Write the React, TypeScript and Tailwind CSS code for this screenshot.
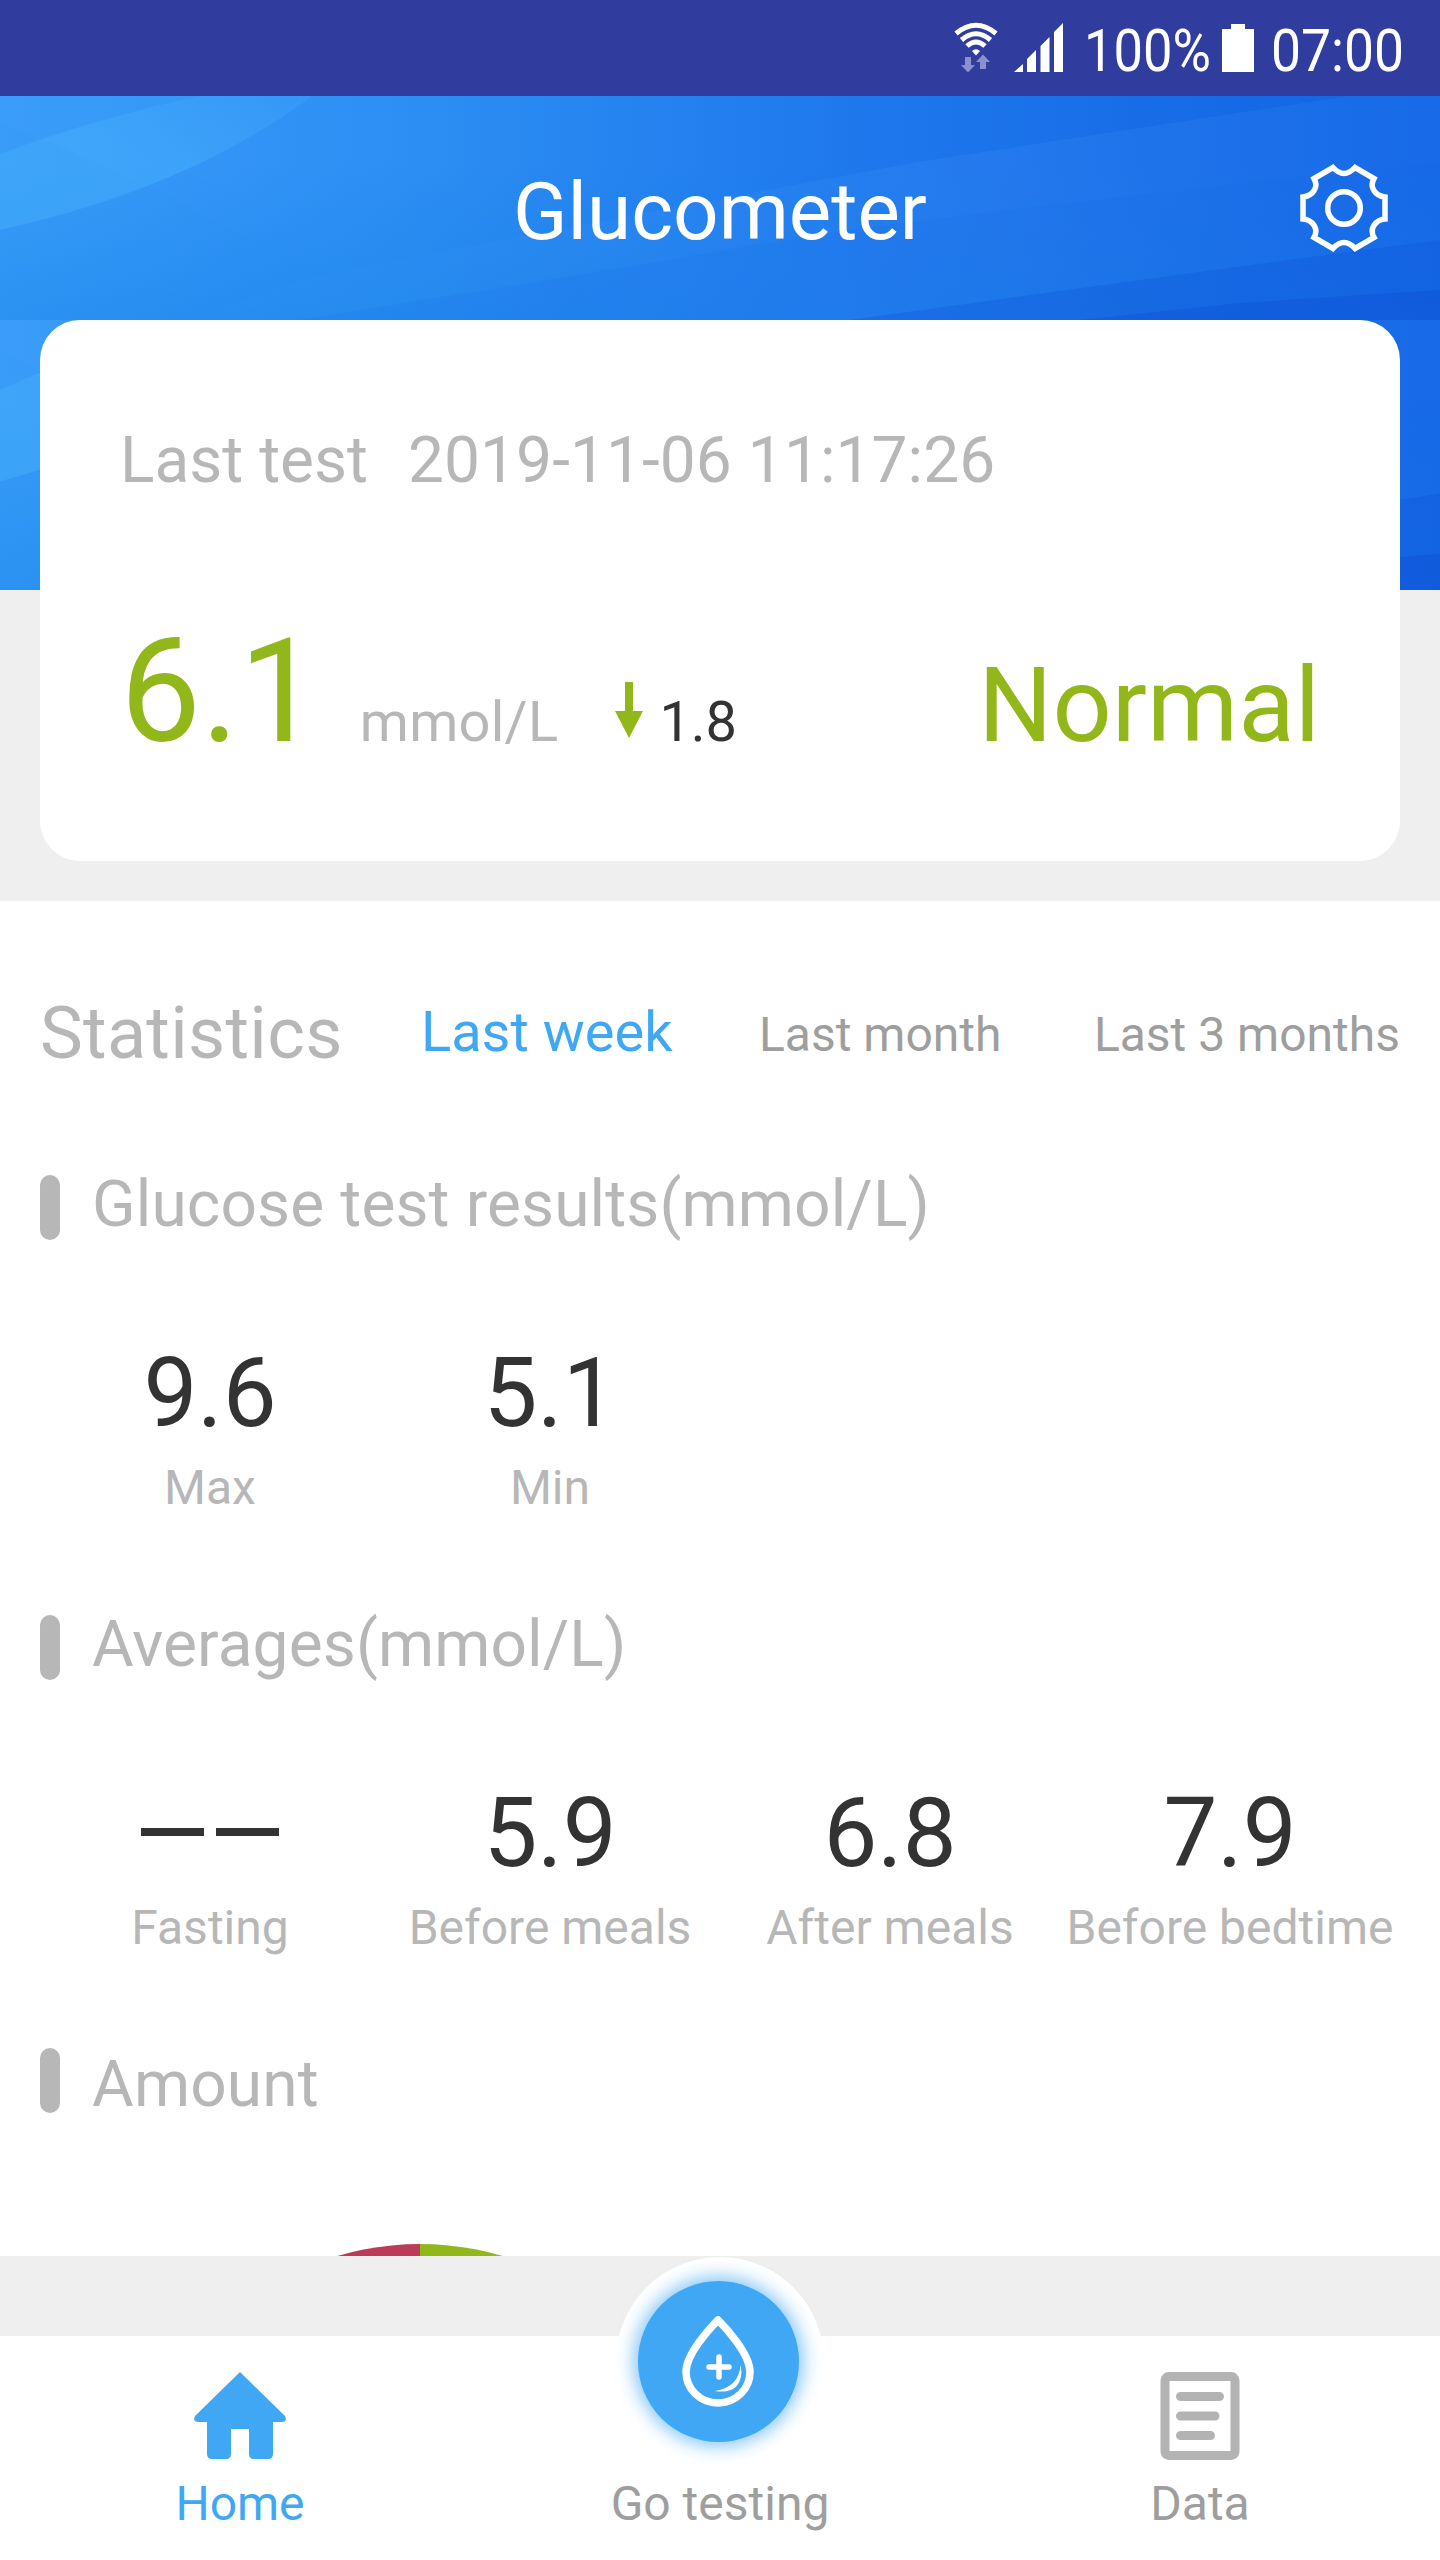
import type { ReactNode } from "react";

const results = [
  { label: "Max", value: "9.6" },
  { label: "Min", value: "5.1" },
];

const averages = [
  { label: "Fasting", value: null },
  { label: "Before meals", value: "5.9" },
  { label: "After meals", value: "6.8" },
  { label: "Before bedtime", value: "7.9" },
];

function StatusBar() {
  return (
    <div className="flex h-24 items-center justify-end bg-[#303d9f] pr-[37px] text-white">
      <svg width="44" height="52" viewBox="0 0 44 52" className="mr-4">
        <g fill="none" stroke="#fff" strokeWidth="5">
          <path d="M2 11.5Q22 -5 42 11.5" />
          <path d="M7.500 18Q22 5.500 36.500 18" />
          <path d="M13 24Q22 16 31 24" />
        </g>
        <path d="M18 29Q22 25.500 26 29L22 33.500Z" fill="#fff" />
        <path d="M11 35h6v8h4l-7 7.500-7-7.500h4zM26 47h6v-7h4l-7-7.500-7 7.500h4z" fill="#8a91cb" />
      </svg>
      <svg width="50" height="50" viewBox="0 0 50 50" className="mr-[20px]" fill="#fff">
        <path d="M0 49L9 41V49ZM13 49V36L22 27V49ZM26.500 49V23L35.500 14V49ZM40 49V9L49 0V49Z" />
      </svg>
      <span className="w-[124px] pt-[4px] text-[59px] leading-none whitespace-nowrap">
        <span className="block w-[138px] origin-left scale-x-[0.89]">100%</span>
      </span>
      <svg width="32" height="48" viewBox="0 0 32 48" className="ml-[14px] mr-[17px]" fill="#fff">
        <path d="M9 0H23V5H32V48H0V5H9Z" />
      </svg>
      <span className="w-[132px] pt-[4px] text-[59px] leading-none whitespace-nowrap">
        <span className="block w-[146px] origin-left scale-x-[0.905]">07:00</span>
      </span>
    </div>
  );
}

// Blue wave artwork, used behind the title and again behind the card
function Waves({ id }: { id: string }) {
  return (
    <svg viewBox="0 0 1440 224" preserveAspectRatio="none" className="absolute inset-0 h-full w-full">
      <defs>
        <linearGradient id={`${id}-base`} x1="0" y1="0" x2="1" y2="0">
          <stop offset="0" stopColor="#3a9cf9" />
          <stop offset="0.3" stopColor="#2c8df3" />
          <stop offset="0.6" stopColor="#1e78ec" />
          <stop offset="0.85" stopColor="#166ae6" />
          <stop offset="1" stopColor="#1164e5" />
        </linearGradient>
        <linearGradient id={`${id}-shade`} x1="0" y1="0" x2="0" y2="1">
          <stop offset="0.3" stopColor="#0a7be0" stopOpacity="0" />
          <stop offset="1" stopColor="#0a7be0" stopOpacity="0.3" />
        </linearGradient>
        <linearGradient id={`${id}-lobe`} x1="0" y1="1" x2="1" y2="0">
          <stop offset="0" stopColor="#49b3ff" stopOpacity="0.4" />
          <stop offset="0.5" stopColor="#49b3ff" stopOpacity="0.4" />
          <stop offset="1" stopColor="#49b3ff" stopOpacity="0.1" />
        </linearGradient>
        <linearGradient id={`${id}-ray`} x1="0" y1="0" x2="1" y2="0">
          <stop offset="0" stopColor="#4f9bff" stopOpacity="0.02" />
          <stop offset="0.6" stopColor="#4f9bff" stopOpacity="0.16" />
          <stop offset="1" stopColor="#4f9bff" stopOpacity="0.1" />
        </linearGradient>
      </defs>
      <rect width="1440" height="224" fill={`url(#${id}-base)`} />
      <rect width="1440" height="224" fill={`url(#${id}-shade)`} />
      <path d="M312 0Q190 92 0 134V0Z" fill="#49b3ff" fillOpacity="0.08" />
      <path d="M312 0Q190 92 0 134V58Q90 24 200 0Z" fill={`url(#${id}-lobe)`} />
      <path d="M0 26Q180 100 310 180L230 224H0Z" fill="#2a9af5" fillOpacity="0.08" />
      <path d="M1440 -14Q1148 31 918 66Q588 127 312 181L180 224H1440Z" fill={`url(#${id}-ray)`} />
      <path d="M1440 67Q1102 101 826 137Q551 184 300 224H1440Z" fill="#1a63ea" fillOpacity="0.12" />
      <path d="M1440 144Q1194 176 850 224H1440Z" fill="#0d4fd8" fillOpacity="0.28" />
      <path d="M1440 194L1240 207L1080 224H1440Z" fill="#0a49d2" fillOpacity="0.3" />
    </svg>
  );
}

function Gear() {
  return (
    <svg width="88" height="88" viewBox="0 0 88 88" fill="none" stroke="#fff" strokeWidth="5.500">
      <circle cx="44" cy="44" r="16.300" />
      <path d="M33 3.500Q44 15.500 55 3.500L74 14.500C69 23 75 32 85 33V55C75 56 69 65 74 73.500L55 84.500Q44 72.500 33 84.500L14 73.500C19 65 13 56 3 55V33C13 32 19 23 14 14.500Z" />
    </svg>
  );
}

function Section({ title, children }: { title: string; children?: ReactNode }) {
  return (
    <section className="group h-[440px]">
      <div className="flex h-[65px] items-center">
        <span className="h-[65px] w-5 rounded-full bg-[#b7b7b7] group-last:-mt-[14px]" />
        <h2 className="ml-8 -mt-[5px] text-[64px] leading-[66px] tracking-[0.13px] text-[#b7b7b7]">
          {title}
        </h2>
      </div>
      {children}
    </section>
  );
}

function Stats({ items }: { items: { label: string; value: string | null }[] }) {
  return (
    <div className="grid grid-cols-4 pt-[97px] text-center">
      {items.map((item) => (
        <div key={item.label} className="whitespace-nowrap">
          <div className="flex h-[112px] items-center justify-center text-[96px] leading-[112px] text-[#333]">
            {item.value ?? (
              <div className="-mt-0.5 flex gap-3">
                <span className="h-[7.5px] w-[63px] bg-[#333]" />
                <span className="h-[7.5px] w-[63px] bg-[#333]" />
              </div>
            )}
          </div>
          <div className="mt-[11px] text-[48px] leading-[56px] text-[#b7b7b7]">{item.label}</div>
        </div>
      ))}
    </div>
  );
}

function BottomNav() {
  return (
    <nav className="relative grid h-[224px] grid-cols-3 bg-white text-center text-[48px] leading-[56px] text-[#9e9e9e]">
      <div className="flex flex-col items-center pt-9 text-[#40a7f4]">
        <svg width="92" height="88" viewBox="0 0 92 88" fill="#40a7f4">
          <path d="M46 0L91 44Q94 50 87 50H79V82Q79 87 74 87H60Q55 87 55 82V57H37V82Q37 87 32 87H18Q13 87 13 82V50H5Q-2 50 1 44Z" />
        </svg>
        <span className="mt-4">Home</span>
      </div>
      <div className="flex flex-col items-center pt-[140px]">
        {/* Raised test button */}
        <div className="absolute -top-[79px] flex h-[208px] w-[208px] items-center justify-center rounded-full bg-white">
          <div className="mr-[3px] flex h-[161px] w-[161px] items-center justify-center rounded-full bg-[#40a7f4] shadow-[0_0_18px_4px_#40a7f4aa]">
            <svg width="72" height="92" viewBox="0 0 72 92" fill="none" stroke="#fff" className="mr-0.5">
              <path d="M36 5C28 13 4 39 4 57A32 31 0 0 0 68 57C68 39 44 13 36 5Z" strokeWidth="7.500" strokeLinejoin="round" />
              <path d="M37 42V62M27 52H47" strokeWidth="5.500" strokeLinecap="round" />
              <path d="M58.500 50Q57 72 33 76Q58 80 59.500 57Z" fill="#fff" stroke="none" />
            </svg>
          </div>
        </div>
        <span>Go testing</span>
      </div>
      <div className="flex flex-col items-center pt-9">
        <svg width="80" height="88" viewBox="0 0 80 88" fill="none" stroke="#b3b3b3" strokeWidth="9">
          <rect x="5" y="4.500" width="70" height="79" rx="4" />
          <path d="M20.500 24.500H59.500M20.500 44H55M20.500 63.500H50.500" strokeLinecap="round" />
        </svg>
        <span className="mt-4">Data</span>
      </div>
    </nav>
  );
}

export default function App() {
  return (
    <div className="flex h-[2560px] w-[1440px] flex-col overflow-hidden bg-white font-['Roboto',sans-serif]">
      <StatusBar />

      {/* Header */}
      <header className="relative h-[224px]">
        <Waves id="header" />
        <div className="relative grid h-full grid-cols-[140px_1fr_140px] items-center">
          <h1 className="col-start-2 pt-[7px] text-center text-[80px] leading-[94px] text-white">
            Glucometer
          </h1>
          <Gear />
        </div>
      </header>

      {/* Last test */}
      <div className="relative h-[581px] bg-[#efefef] px-10">
        <div className="absolute inset-x-0 top-0 h-[270px]">
          <Waves id="card" />
        </div>
        <div className="relative h-[541px] rounded-[40px] bg-white px-20 pt-[103px]">
          <div className="flex gap-[40px] text-[64px] leading-[76px] whitespace-nowrap text-[#b7b7b7]">
            <span>Last test</span>
            <span className="tracking-[0.08px]">2019-11-06 11:17:26</span>
          </div>
          <div className="mt-[109px] flex items-baseline whitespace-nowrap">
            <span className="text-[144px] leading-[168px] text-[#92b71a]">6.1</span>
            <span className="ml-[40px] text-[56px] tracking-[0.25px] text-[#b7b7b7]">mmol/L</span>
            <svg width="28" height="59" viewBox="0 0 28 59" className="ml-[57px]" fill="#92b71a">
              <path d="M10 0H18V29H28L14 56L0 29H10Z" />
            </svg>
            <span className="ml-[16px] text-[56px] text-[#333]">1.8</span>
            <span className="ml-auto text-[104px] leading-[120px] text-[#92b71a]">Normal</span>
          </div>
        </div>
      </div>

      {/* Statistics */}
      <main className="flex-1 overflow-hidden px-10">
        <div className="flex h-[274px] items-start pt-[91px] whitespace-nowrap">
          <h2 className="w-[381px] text-[72px] leading-[84px] tracking-[0.3px] text-[#b7b7b7]">
            Statistics
          </h2>
          <div className="flex flex-1 items-baseline pt-[7px] text-[48px] text-[#9e9e9e]">
            <button className="w-[338px] text-left text-[56px] leading-[66px] text-[#40a7f4]">
              Last week
            </button>
            <button>Last month</button>
            <button className="ml-auto">Last 3 months</button>
          </div>
        </div>
        <div>
          <Section title="Glucose test results(mmol/L)">
            <Stats items={results} />
          </Section>
          <Section title="Averages(mmol/L)">
            <Stats items={averages} />
          </Section>
          <Section title="Amount">
            <svg width="580" height="580" viewBox="0 0 580 580" className="mt-[124px] ml-[90px]">
              <path d="M290 0A290 290 0 0 0 290 580Z" fill="#bb3b58" />
              <path d="M290 0A290 290 0 0 1 290 580Z" fill="#92b71a" />
            </svg>
          </Section>
        </div>
      </main>

      <div className="h-20 bg-[#efefef]" />
      <BottomNav />
    </div>
  );
}
